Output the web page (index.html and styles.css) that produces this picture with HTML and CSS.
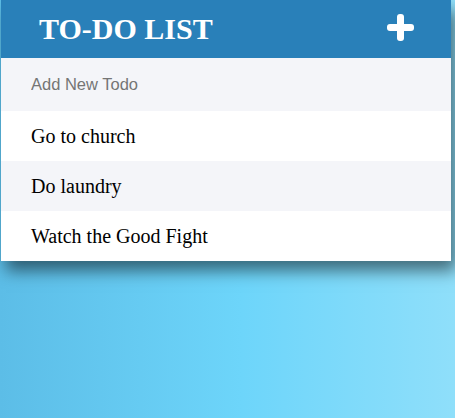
FILE: index.html
```html
<!DOCTYPE html>
<html>
<head>
<meta charset="utf-8">
<link rel="stylesheet" href="styles.css">
</head>
<body>
<div class="todo">
  <header class="todo-header">
    <h1 class="title">TO-DO LIST</h1>
    <svg class="plus" viewBox="0 0 27 27" width="27" height="27" aria-hidden="true">
      <rect x="0" y="10" width="27" height="7" rx="3" fill="#fff"/>
      <rect x="10" y="0" width="7" height="27" rx="3" fill="#fff"/>
    </svg>
  </header>
  <input class="new-todo" type="text" placeholder="Add New Todo">
  <ul class="items">
    <li class="item">Go to church</li>
    <li class="item">Do laundry</li>
    <li class="item">Watch the Good Fight</li>
  </ul>
</div>
</body>
</html>
```

FILE: styles.css
```css
html, body {
  margin: 0;
  padding: 0;
  height: 100%;
}
body {
  background: linear-gradient(to right, #5cbde7 0%, #6dd5fa 53%, #8fdffa 100%);
  font-family: "Liberation Serif", "Times New Roman", serif;
}
.todo {
  width: 450px;
  margin-left: 1px;
  background: #fff;
  box-shadow: 5px 10px 15px rgba(0, 0, 0, 0.5);
}
.todo-header {
  height: 58px;
  background: #2980b9;
  display: flex;
  align-items: center;
  justify-content: space-between;
  padding: 0 37px 0 38px;
  box-sizing: border-box;
}
.title {
  margin: 0;
  color: #fff;
  font-size: 30px;
  font-weight: bold;
  line-height: 58px;
  font-family: "Liberation Serif", "Times New Roman", serif;
}
.plus {
  display: block;
  margin-bottom: 4px;
}
.new-todo {
  display: block;
  width: 100%;
  height: 53px;
  box-sizing: border-box;
  border: none;
  outline: none;
  margin: 0;
  padding: 0 30px;
  background: #f4f5f9;
  font-family: "Liberation Sans", Arial, sans-serif;
  font-size: 16.5px;
  color: #333;
}
.new-todo::placeholder {
  color: #757575;
}
.items {
  list-style: none;
  margin: 0;
  padding: 0;
}
.item {
  height: 50px;
  line-height: 50px;
  padding-left: 30px;
  font-size: 20px;
  color: #000;
  background: #fff;
}
.item:nth-child(2) {
  background: #f4f5f9;
}
```
